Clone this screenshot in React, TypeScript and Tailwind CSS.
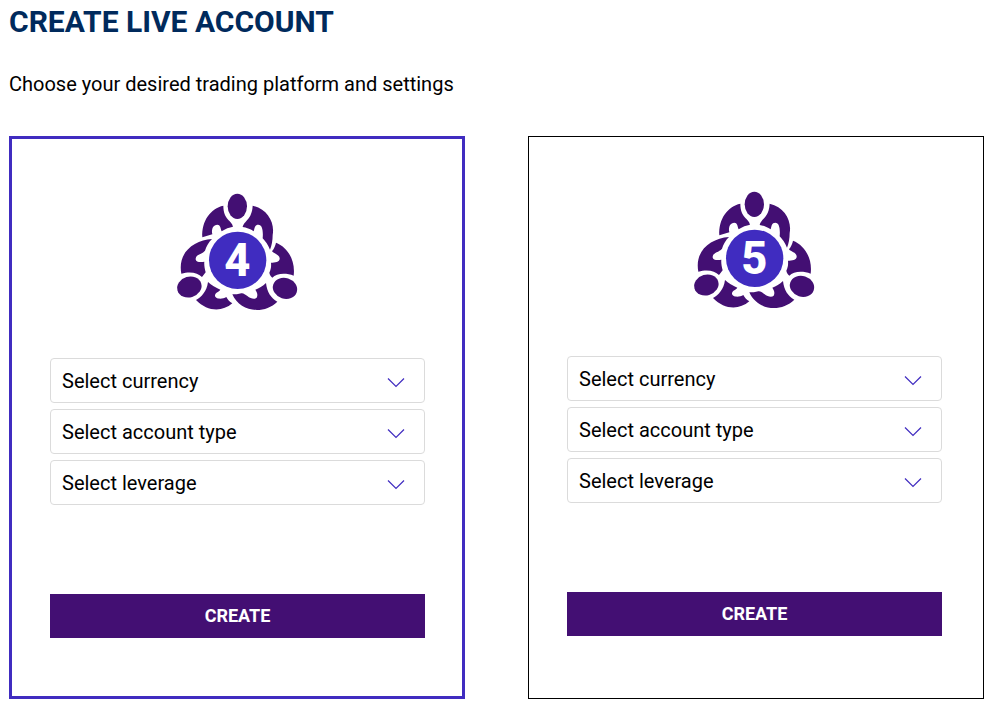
const selects = [
  { id: "currency", label: "Select currency", options: ["USD", "EUR", "GBP"] },
  { id: "type", label: "Select account type", options: ["Standard", "Raw"] },
  { id: "leverage", label: "Select leverage", options: ["1:100", "1:200", "1:500"] },
];

function Logo({ digit }: { digit: string }) {
  return (
    <svg width="135" height="132" viewBox="0 0 405 396" role="img" aria-label={`Platform ${digit}`}>
      <g fill="#430f73">
        <ellipse cx="202" cy="64" rx="29" ry="38" />
        <ellipse cx="58" cy="306" rx="37" ry="31" transform="rotate(-16 58 306)" />
        <ellipse cx="345" cy="310" rx="37" ry="31" transform="rotate(18 345 310)" />
        <path d="M160 62 C122 70 94 108 97 157 L127 148 C123 130 131 119 142 119 C151 119 151 129 155 139 C166 131 178 127 189 125 C186 106 160 105 160 62Z" />
        <path d="M248 62 C292 72 315 112 308 150 C308 167 305 182 300 194 C294 180 287 169 278 160 C280 138 277 119 265 119 C254 119 254 129 251 139 C240 131 229 128 218 126 C222 107 246 104 248 62Z" />
        <path d="M126 162 C72 166 22 202 34 266 C62 258 84 264 96 276 L107 262 C104 250 102 241 103 230 C91 233 76 231 77 221 C78 208 96 208 105 197 C109 184 116 172 126 162Z" />
        <path d="M318 173 C352 186 377 225 371 272 C349 263 319 264 307 278 C301 273 299 268 298 263 C303 253 304 244 303 233 C315 233 330 230 329 220 C328 208 312 207 306 199 C313 190 316 182 318 173Z" />
        <path d="M114 291 C110 320 95 335 78 345 C112 380 156 382 187 355 C178 350 173 343 169 336 C157 344 134 343 135 331 C136 322 148 320 151 314 C137 308 124 301 114 291Z" />
        <path d="M187 328 C209 380 280 391 322 350 C303 339 291 322 288 294 C278 304 267 309 256 314 C262 323 264 331 260 338 C254 344 242 341 232 333 C225 329 221 324 214 325 C205 328 196 328 187 328Z" />
      </g>
      <circle cx="203" cy="226" r="86" fill="#402cc0" />
      <text x="202" y="274" textAnchor="middle" fill="#fff" fontSize="136" fontWeight="800" className="font-['Roboto',sans-serif]">
        {digit}
      </text>
    </svg>
  );
}

function PlatformCard({ digit, className }: { digit: string; className: string }) {
  return (
    <form className={`flex min-w-0 flex-1 flex-col items-center pt-[46px] pb-[58px] ${className}`} onSubmit={(e) => e.preventDefault()}>
      <Logo digit={digit} />
      <div className="mt-[41px] flex w-full flex-col gap-1.5">
        {selects.map((s) => (
          <div key={s.id} className="relative">
            <select
              id={`${s.id}-${digit}`}
              aria-label={s.label}
              defaultValue=""
              className="block h-[45px] w-full appearance-none rounded-[4px] border border-[#dbdbdb] bg-white pr-12 pl-[11px] text-[20px] text-black"
            >
              <option value="">{s.label}</option>
              {s.options.map((o) => (
                <option key={o}>{o}</option>
              ))}
            </select>
            <svg className="pointer-events-none absolute top-[19px] right-5" width="18" height="11" viewBox="0 0 18 11" fill="none" stroke="#402cc0" strokeWidth="1.2" aria-hidden="true">
              <path d="M1 1.5 9 9.5 17 1.5" />
            </svg>
          </div>
        ))}
      </div>
      <button type="submit" className="mt-[89px] h-11 w-full bg-[#430f73] pb-0.5 text-[18px] font-bold text-white">
        CREATE
      </button>
    </form>
  );
}

export default function App() {
  return (
    <main className="bg-white pr-1 pb-[3px] pl-[9px] font-['Roboto',sans-serif] text-black">
      <h1 className="pt-1 text-[30px] leading-9 font-bold text-[#002a5c]">CREATE LIVE ACCOUNT</h1>
      <p className="mt-[30px] text-[20px] leading-7">Choose your desired trading platform and settings</p>
      <div className="mt-[38px] flex gap-[63px]">
        <PlatformCard digit="4" className="border-3 border-[#402cc0] pr-[37px] pl-[38px]" />
        <PlatformCard digit="5" className="border border-black pr-[41px] pl-[38px]" />
      </div>
    </main>
  );
}
